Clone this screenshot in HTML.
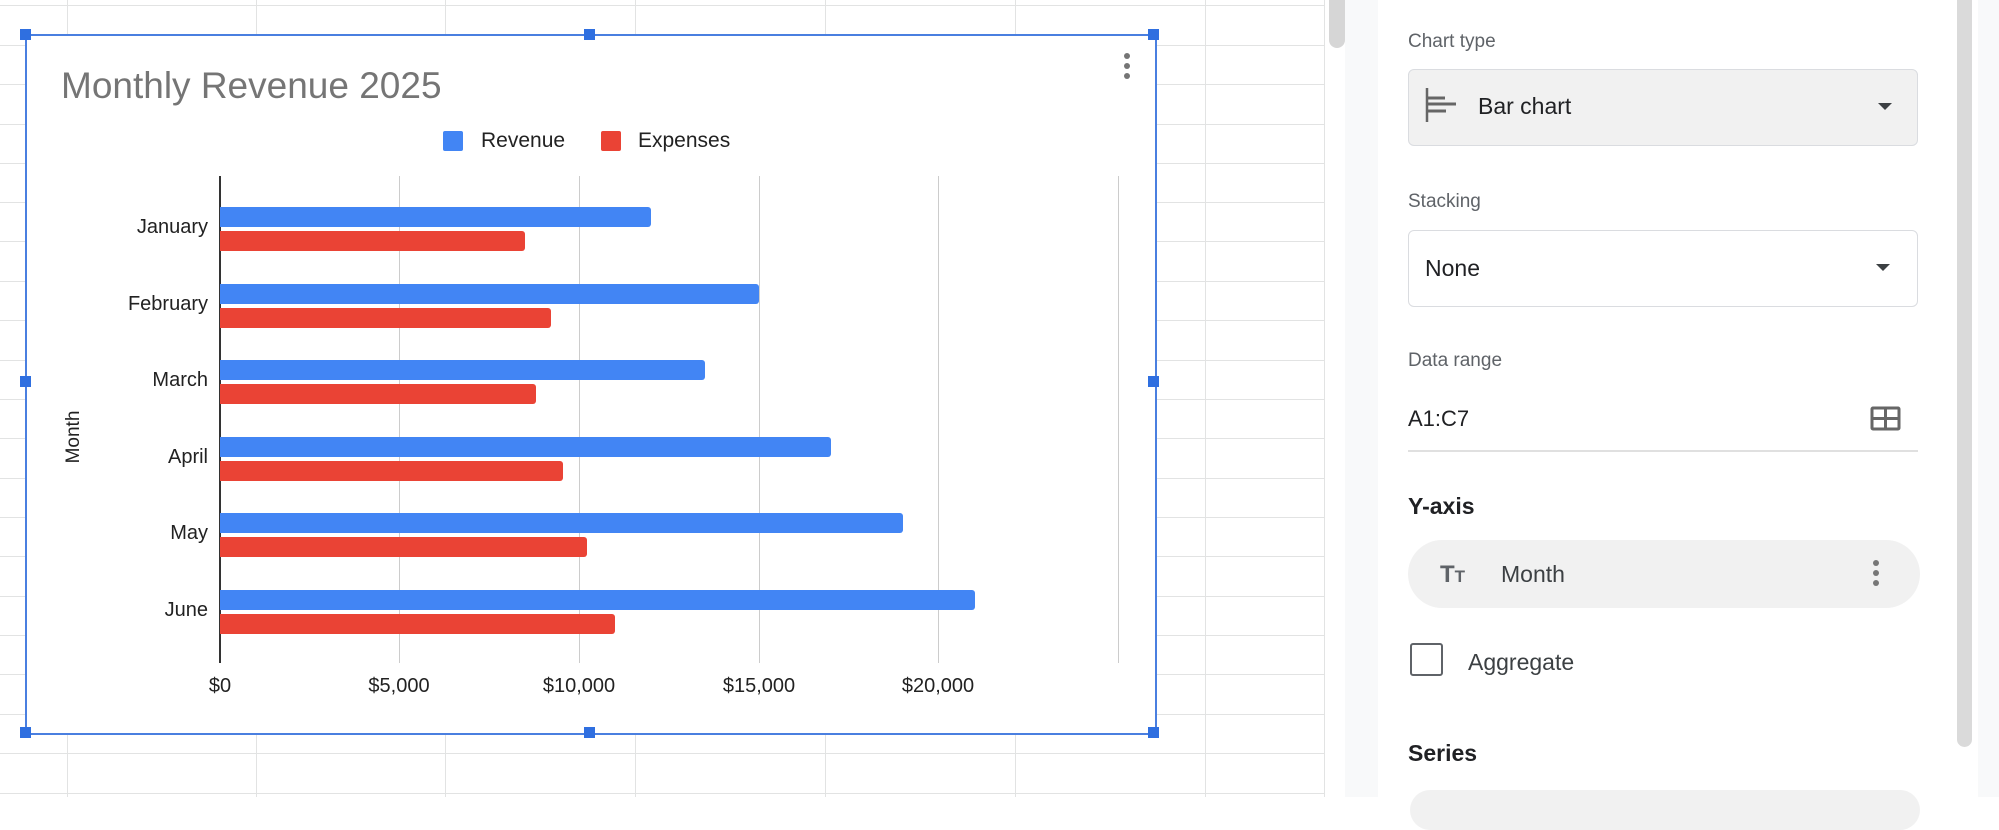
<!DOCTYPE html>
<html><head><style>
html,body{margin:0;padding:0;width:1999px;height:797px;overflow:hidden;background:#fff;font-family:"Liberation Sans",Arial,sans-serif;}
.abs{position:absolute}
.gv{position:absolute;top:0;height:797px;width:1px;background:#e2e3e3}
.gh{position:absolute;left:0;width:1325px;height:1px;background:#e2e3e3}
.h{position:absolute;width:11px;height:11px;background:#2f6fe0}
.lbl{position:absolute;right:1791px;font-size:20px;color:#222;white-space:nowrap}
.xl{position:absolute;top:675px;font-size:20px;color:#222;transform:translateX(-50%)}
.bar{position:absolute;left:220px;height:20px;border-radius:0 3px 3px 0}
.b{background:#4285f4}.r{background:#ea4335}
.pl{position:absolute;left:1408px;font-size:19px;color:#5f6368}
</style></head><body>
<div class="gv" style="left:67px"></div><div class="gv" style="left:256px"></div><div class="gv" style="left:445px"></div><div class="gv" style="left:635px"></div><div class="gv" style="left:825px"></div><div class="gv" style="left:1015px"></div><div class="gv" style="left:1205px"></div><div class="gv" style="left:1324px"></div>
<div class="gh" style="top:5px"></div><div class="gh" style="top:45px"></div><div class="gh" style="top:84px"></div><div class="gh" style="top:124px"></div><div class="gh" style="top:163px"></div><div class="gh" style="top:202px"></div><div class="gh" style="top:241px"></div><div class="gh" style="top:281px"></div><div class="gh" style="top:320px"></div><div class="gh" style="top:360px"></div><div class="gh" style="top:399px"></div><div class="gh" style="top:438px"></div><div class="gh" style="top:478px"></div><div class="gh" style="top:517px"></div><div class="gh" style="top:556px"></div><div class="gh" style="top:596px"></div><div class="gh" style="top:635px"></div><div class="gh" style="top:674px"></div><div class="gh" style="top:714px"></div><div class="gh" style="top:753px"></div><div class="gh" style="top:793px"></div>
<div class="abs" style="left:25px;top:34px;width:1128px;height:697px;background:#fff;border:2px solid #4a7fe0;"></div>
<div class="h" style="left:20px;top:29px"></div><div class="h" style="left:584px;top:29px"></div><div class="h" style="left:1148px;top:29px"></div>
<div class="h" style="left:20px;top:376px"></div><div class="h" style="left:1148px;top:376px"></div>
<div class="h" style="left:20px;top:727px"></div><div class="h" style="left:584px;top:727px"></div><div class="h" style="left:1148px;top:727px"></div>
<div class="abs" style="left:1124px;top:53px;width:6px;height:6px;border-radius:50%;background:#757575;box-shadow:0 10px 0 #757575,0 20px 0 #757575"></div>
<div class="abs" style="left:61px;top:65px;font-size:37px;color:#757575">Monthly Revenue 2025</div>
<div class="abs" style="left:443px;top:131px;width:20px;height:20px;background:#4285f4;border-radius:2px"></div>
<div class="abs" style="left:481px;top:129px;font-size:21px;color:#222">Revenue</div>
<div class="abs" style="left:601px;top:131px;width:20px;height:20px;background:#ea4335;border-radius:2px"></div>
<div class="abs" style="left:638px;top:129px;font-size:21px;color:#222">Expenses</div>
<div class="abs" style="left:399px;top:176px;width:1px;height:487px;background:#ccc"></div>
<div class="abs" style="left:579px;top:176px;width:1px;height:487px;background:#ccc"></div>
<div class="abs" style="left:759px;top:176px;width:1px;height:487px;background:#ccc"></div>
<div class="abs" style="left:938px;top:176px;width:1px;height:487px;background:#ccc"></div>
<div class="abs" style="left:1118px;top:176px;width:1px;height:487px;background:#ccc"></div>
<div class="abs" style="left:219px;top:176px;width:2px;height:487px;background:#333"></div>
<div class="bar b" style="top:207px;width:431px"></div><div class="bar r" style="top:231px;width:305px"></div>
<div class="bar b" style="top:284px;width:539px"></div><div class="bar r" style="top:308px;width:331px"></div>
<div class="bar b" style="top:360px;width:485px"></div><div class="bar r" style="top:384px;width:316px"></div>
<div class="bar b" style="top:437px;width:611px"></div><div class="bar r" style="top:461px;width:343px"></div>
<div class="bar b" style="top:513px;width:683px"></div><div class="bar r" style="top:537px;width:367px"></div>
<div class="bar b" style="top:590px;width:755px"></div><div class="bar r" style="top:614px;width:395px"></div>
<div class="lbl" style="top:216px">January</div>
<div class="lbl" style="top:293px">February</div>
<div class="lbl" style="top:369px">March</div>
<div class="lbl" style="top:446px">April</div>
<div class="lbl" style="top:522px">May</div>
<div class="lbl" style="top:599px">June</div>
<div class="xl" style="left:220px">$0</div><div class="xl" style="left:399px">$5,000</div><div class="xl" style="left:579px">$10,000</div><div class="xl" style="left:759px">$15,000</div><div class="xl" style="left:938px">$20,000</div>
<div class="abs" style="left:74px;top:437px;font-size:19px;color:#222;transform:translate(-50%,-50%) rotate(-90deg)">Month</div>
<div class="abs" style="left:1329px;top:0;width:16px;height:48px;background:#d6d6d6;border-radius:0 0 8px 8px"></div>
<div class="abs" style="left:1345px;top:0;width:33px;height:797px;background:#f8f9fa"></div>
<div class="abs" style="left:1978px;top:0;width:21px;height:797px;background:#f8f9fa"></div>
<div class="abs" style="left:1957px;top:0;width:15px;height:747px;background:#dadada;border-radius:0 0 8px 8px"></div>
<div class="pl" style="top:31px">Chart type</div>
<div class="abs" style="left:1408px;top:69px;width:508px;height:75px;background:#f1f1f1;border:1px solid #dadce0;border-radius:6px"></div>
<svg class="abs" style="left:1424px;top:86px" width="36" height="40"><path d="M3 2v34" stroke="#666" stroke-width="2.5"/><path d="M3 12h18M3 18h29M3 25h19" stroke="#666" stroke-width="3"/></svg>
<div class="abs" style="left:1478px;top:93px;font-size:23px;color:#202124">Bar chart</div>
<svg class="abs" style="left:1877px;top:102px" width="16" height="10"><path d="M1 1h14l-7 7z" fill="#3c4043"/></svg>
<div class="pl" style="top:191px">Stacking</div>
<div class="abs" style="left:1408px;top:230px;width:508px;height:75px;background:#fff;border:1px solid #dadce0;border-radius:6px"></div>
<div class="abs" style="left:1425px;top:255px;font-size:23px;color:#202124">None</div>
<svg class="abs" style="left:1875px;top:263px" width="16" height="10"><path d="M1 1h14l-7 7z" fill="#3c4043"/></svg>
<div class="pl" style="top:350px">Data range</div>
<div class="abs" style="left:1408px;top:406px;font-size:22px;color:#202124">A1:C7</div>
<svg class="abs" style="left:1870px;top:406px" width="32" height="28"><rect x="2" y="2" width="27" height="21" fill="none" stroke="#666" stroke-width="3" rx="1"/><path d="M15.5 2v21M2 12.5h27" stroke="#666" stroke-width="3"/></svg>
<div class="abs" style="left:1408px;top:450px;width:510px;height:2px;background:#e0e0e0"></div>
<div class="abs" style="left:1408px;top:493px;font-size:23px;font-weight:bold;color:#202124">Y-axis</div>
<div class="abs" style="left:1408px;top:540px;width:512px;height:68px;background:#f1f1f1;border-radius:34px"></div>
<div class="abs" style="left:1440px;top:561px;font-size:24px;font-weight:bold;color:#5f6368;letter-spacing:0px">T<span style="font-size:17px">T</span></div>
<div class="abs" style="left:1501px;top:561px;font-size:23px;color:#3c4043">Month</div>
<div class="abs" style="left:1873px;top:560px;width:6px;height:6px;border-radius:50%;background:#777;box-shadow:0 10px 0 #777,0 20px 0 #777"></div>
<div class="abs" style="left:1410px;top:643px;width:29px;height:29px;border:2.5px solid #5f6368;border-radius:3px"></div>
<div class="abs" style="left:1468px;top:649px;font-size:23px;color:#3c4043">Aggregate</div>
<div class="abs" style="left:1408px;top:740px;font-size:23px;font-weight:bold;color:#202124">Series</div>
<div class="abs" style="left:1410px;top:790px;width:510px;height:40px;background:#f1f1f1;border-radius:20px"></div>
</body></html>
